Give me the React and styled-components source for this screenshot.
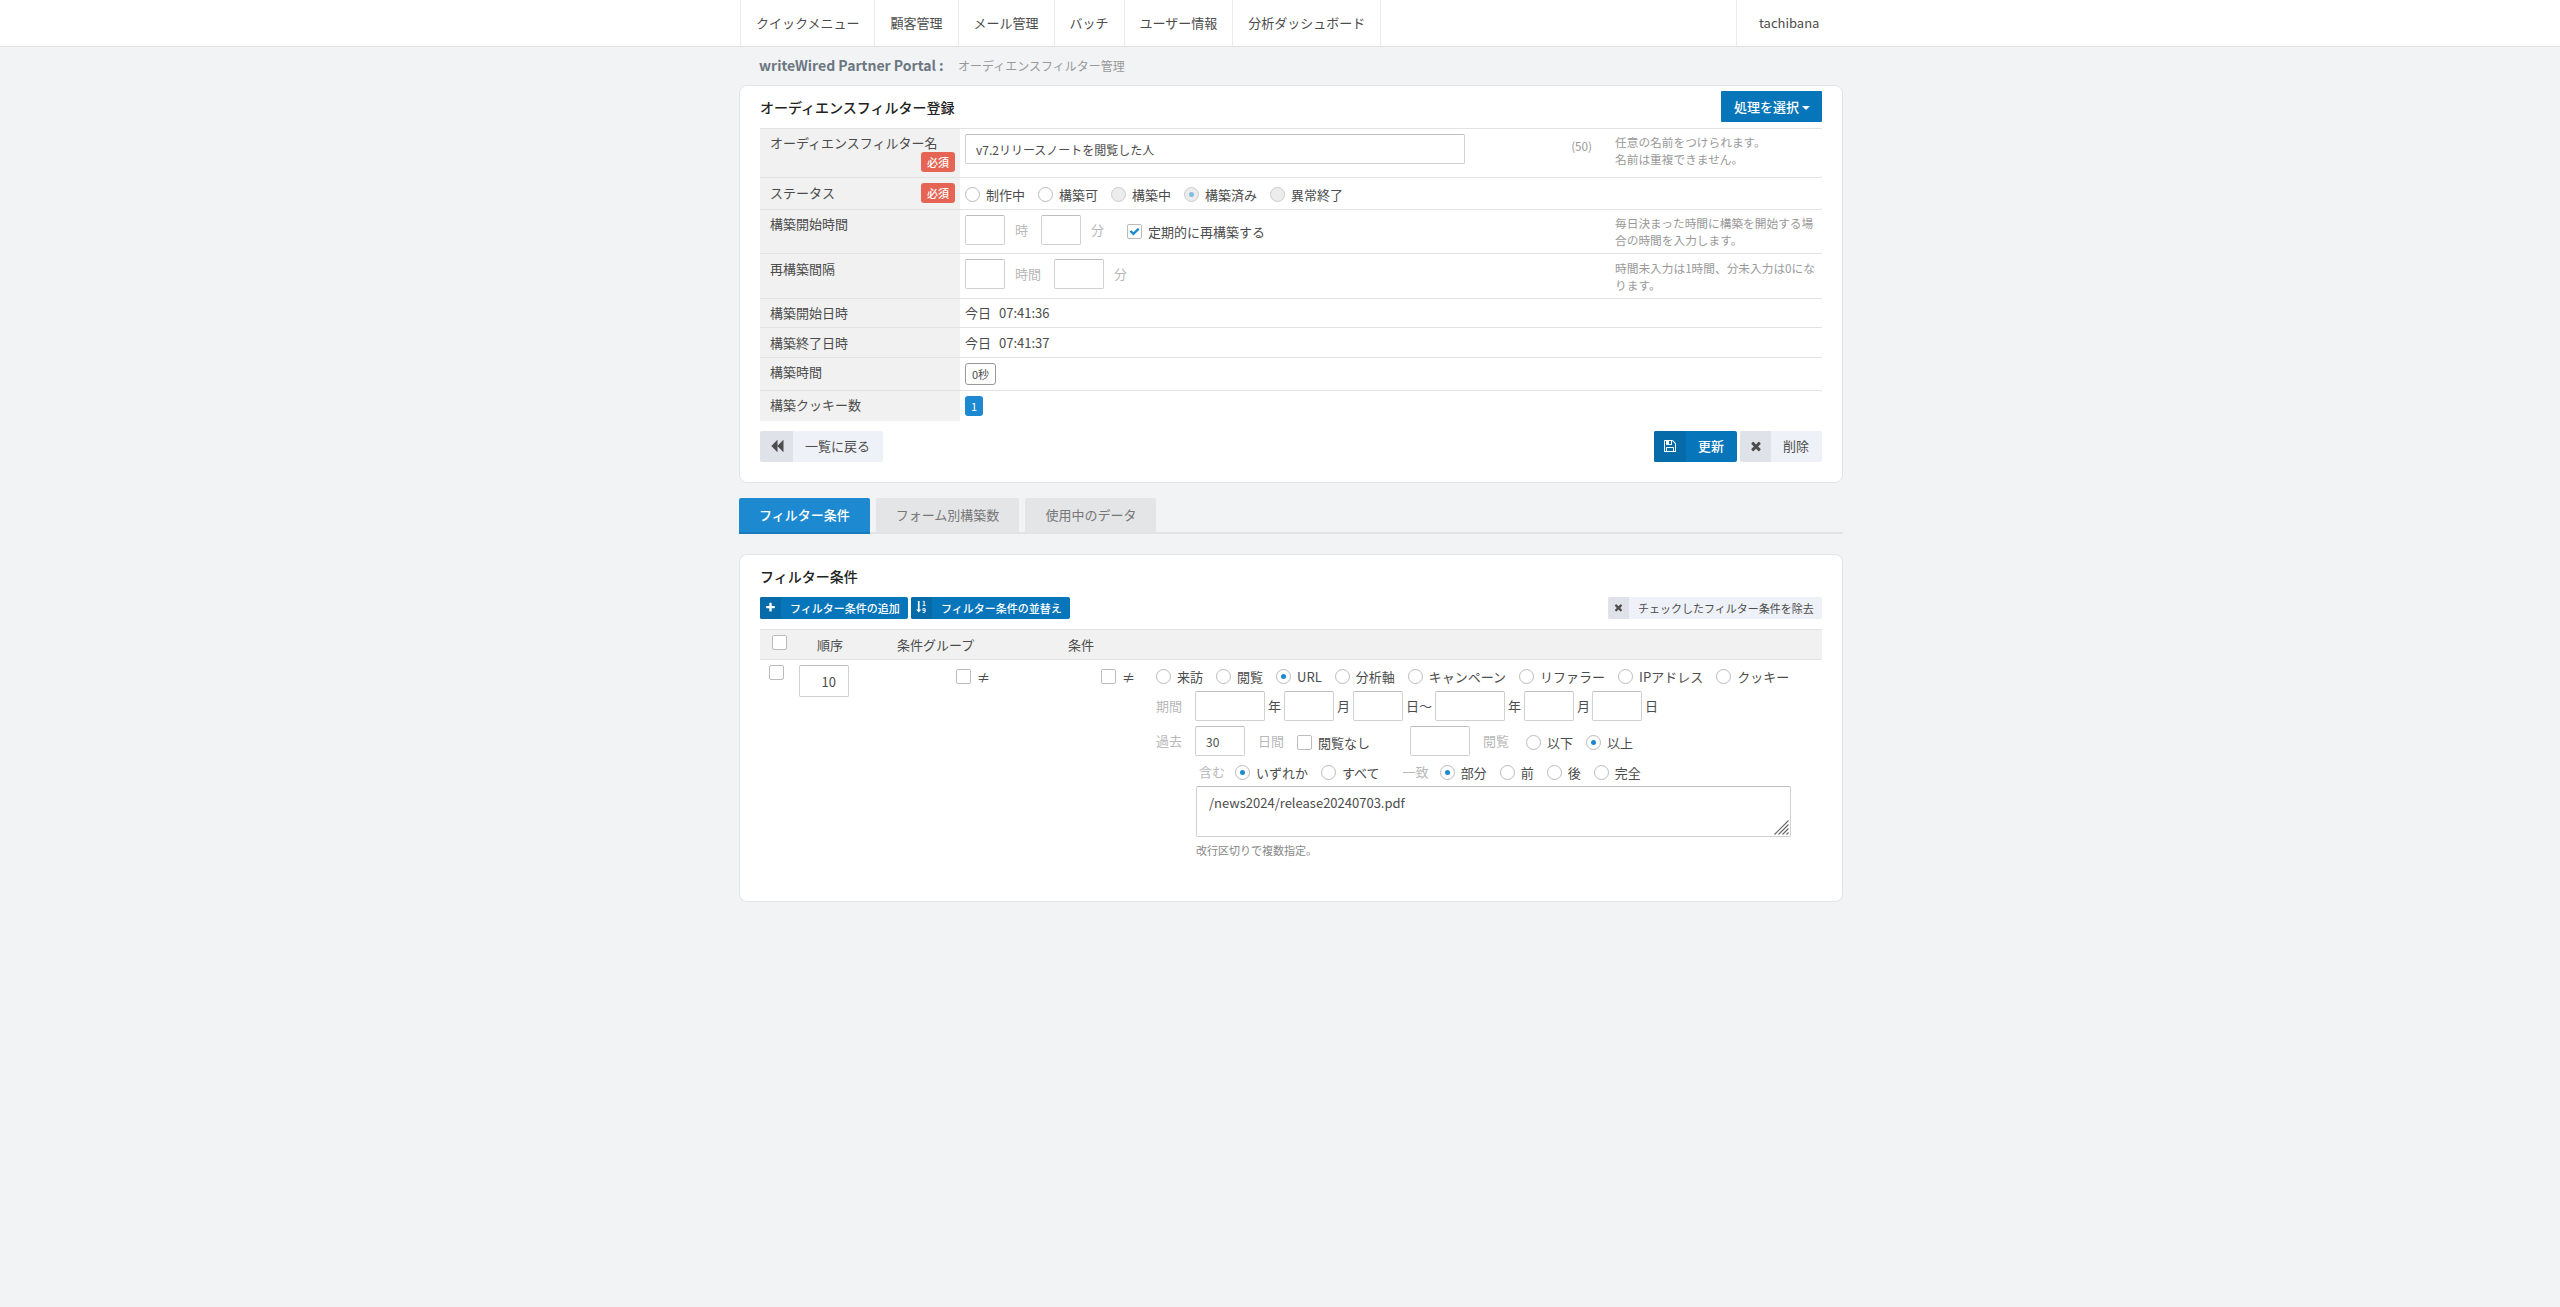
import React from "react";
import styled, { createGlobalStyle, css } from "styled-components";

const ICONS = {
  backward:
    "M1683 141q19-19 32-13t13 32v1472q0 26-13 32t-32-13l-710-710q-9-9-13-19v710q0 26-13 32t-32-13l-710-710q-19-19-19-45t19-45l710-710q19-19 32-13t13 32v710q4-10 13-19z",
  save: "M512 1536h768v-384h-768v384zm896 0h128v-896q0-14-10-38.5t-20-34.5l-281-281q-10-10-34-20t-39-10v416q0 40-28 68t-68 28h-576q-40 0-68-28t-28-68v-416h-128v1280h128v-416q0-40 28-68t68-28h832q40 0 68 28t28 68v416zm-384-928v-320q0-13-9.5-22.5t-22.5-9.5h-192q-13 0-22.5 9.5t-9.5 22.5v320q0 13 9.5 22.5t22.5 9.5h192q13 0 22.5-9.5t9.5-22.5zm640 32v928q0 40-28 68t-68 28h-1344q-40 0-68-28t-28-68v-1344q0-40 28-68t68-28h928q40 0 88 20t76 48l280 280q28 28 48 76t20 88z",
  times:
    "M1490 1322q0 40-28 68l-136 136q-28 28-68 28t-68-28l-294-294-294 294q-28 28-68 28t-68-28l-136-136q-28-28-28-68t28-68l294-294-294-294q-28-28-28-68t28-68l136-136q28-28 68-28t68 28l294 294 294-294q28-28 68-28t68 28l136 136q28 28 28 68t-28 68l-294 294 294 294q28 28 28 68z",
  plus: "M1600 736v192q0 40-28 68t-68 28h-416v416q0 40-28 68t-68 28h-192q-40 0-68-28t-28-68v-416h-416q-40 0-68-28t-28-68v-192q0-40 28-68t68-28h416v-416q0-40 28-68t68-28h192q40 0 68 28t28 68v416h416q40 0 68 28t28 68z",
  check:
    "M1671 566q0 40-28 68l-724 724-136 136q-28 28-68 28t-68-28l-136-136-362-362q-28-28-28-68t28-68l136-136q28-28 68-28t68 28l294 295 656-657q28-28 68-28t68 28l136 136q28 28 28 68z",
};

const MENU = [
  "クイックメニュー",
  "顧客管理",
  "メール管理",
  "バッチ",
  "ユーザー情報",
  "分析ダッシュボード",
];

const STATUSES = [
  { label: "制作中" },
  { label: "構築可" },
  { label: "構築中", disabled: true },
  { label: "構築済み", disabled: true, checked: true },
  { label: "異常終了", disabled: true },
];

const TARGETS = [
  "来訪",
  "閲覧",
  "URL",
  "分析軸",
  "キャンペーン",
  "リファラー",
  "IPアドレス",
  "クッキー",
];

function Icon({ name, size = 14 }) {
  return (
    <svg width={size} height={size} viewBox="0 0 1792 1792" fill="currentColor">
      <path d={ICONS[name]} />
    </svg>
  );
}

function SortIcon() {
  return (
    <SortSvg width="11" height="12" viewBox="0 0 11 12">
      <path d="M1.9 0h1.7v8.4h1.7L2.75 11.4 0.2 8.4h1.7z" />
      <text x="6" y="5.4">
        1
      </text>
      <text x="6" y="11.6">
        9
      </text>
    </SortSvg>
  );
}

function RadioOption({ name, label, checked, disabled }) {
  return (
    <Option>
      <Radio
        type="radio"
        name={name}
        defaultChecked={checked}
        disabled={disabled}
      />
      {label}
    </Option>
  );
}

function CheckOption({ label, checked }) {
  return (
    <Option>
      <Checkbox>{checked && <Icon name="check" size={11} />}</Checkbox>
      {label}
    </Option>
  );
}

function IconButton({ icon, children, ...rest }) {
  return (
    <ButtonBox type="button" {...rest}>
      <ButtonIcon {...rest}>{icon}</ButtonIcon>
      <ButtonText {...rest}>{children}</ButtonText>
    </ButtonBox>
  );
}

function Field({ label, required, height, top = 4, count, help, children }) {
  return (
    <FieldRow $height={height}>
      <FieldLabel $top={top}>
        {label}
        {required && <Required>必須</Required>}
      </FieldLabel>
      <FieldBody>{children}</FieldBody>
      {count && <FieldCount>{count}</FieldCount>}
      <FieldHelp $top={top}>{help}</FieldHelp>
    </FieldRow>
  );
}

function FilterForm() {
  return (
    <Card $height={398}>
      <CardHeader>
        <Title>オーディエンスフィルター登録</Title>
        <Dropdown type="button">
          処理を選択
          <Caret />
        </Dropdown>
      </CardHeader>
      <Field
        label="オーディエンスフィルター名"
        required
        height={49}
        count="(50)"
        help={
          <>
            任意の名前をつけられます。
            <br />
            名前は重複できません。
          </>
        }
      >
        <TextInput $width={500} defaultValue="v7.2リリースノートを閲覧した人" />
      </Field>
      <Field label="ステータス" required height={32} top={5}>
        <StatusGroup>
          {STATUSES.map((s) => (
            <RadioOption key={s.label} name="status" {...s} />
          ))}
        </StatusGroup>
      </Field>
      <Field
        label="構築開始時間"
        height={44}
        help="毎日決まった時間に構築を開始する場合の時間を入力します。"
      >
        <TextInput $width={40} />
        <Unit>時</Unit>
        <TextInput $width={40} />
        <Unit>分</Unit>
        <Rebuild>
          <CheckOption label="定期的に再構築する" checked />
        </Rebuild>
      </Field>
      <Field
        label="再構築間隔"
        height={45}
        top={5}
        help="時間未入力は1時間、分未入力は0になります。"
      >
        <TextInput $width={40} />
        <Unit>時間</Unit>
        <TextInput $width={50} />
        <Unit>分</Unit>
      </Field>
      <Field label="構築開始日時" height={29}>
        <DateText $lift>
          <span>今日</span>
          <span>07:41:36</span>
        </DateText>
      </Field>
      <Field label="構築終了日時" height={30} top={5}>
        <DateText>
          <span>今日</span>
          <span>07:41:37</span>
        </DateText>
      </Field>
      <Field label="構築時間" height={33}>
        <Badge>0秒</Badge>
      </Field>
      <Field label="構築クッキー数" height={31}>
        <Badge $solid>1</Badge>
      </Field>
      <FormActions>
        <IconButton icon={<Icon name="backward" />} $iconWidth={33} $width={123}>
          一覧に戻る
        </IconButton>
        <ActionGroup>
          <IconButton
            icon={<Icon name="save" />}
            $primary
            $iconWidth={32}
            $width={83}
          >
            更新
          </IconButton>
          <IconButton icon={<Icon name="times" />} $iconWidth={31} $width={82}>
            削除
          </IconButton>
        </ActionGroup>
      </FormActions>
    </Card>
  );
}

function ConditionEditor() {
  return (
    <Conditions>
      <OptionLine>
        {TARGETS.map((t) => (
          <RadioOption key={t} name="target" label={t} checked={t === "URL"} />
        ))}
      </OptionLine>
      <PeriodLine>
        <LineLabel>期間</LineLabel>
        <TextInput $width={70} />
        <span>年</span>
        <TextInput $width={50} />
        <span>月</span>
        <TextInput $width={50} />
        <span>日〜</span>
        <TextInput $width={70} />
        <span>年</span>
        <TextInput $width={50} />
        <span>月</span>
        <TextInput $width={50} />
        <span>日</span>
      </PeriodLine>
      <PastLine>
        <LineLabel>過去</LineLabel>
        <TextInput $width={50} defaultValue="30" />
        <Faint $left={13} $right={13}>
          日間
        </Faint>
        <Lowered>
          <CheckOption label="閲覧なし" />
        </Lowered>
        <CountInput $width={60} />
        <Faint $left={13} $right={17}>
          閲覧
        </Faint>
        <Lowered>
          <RadioOption name="bound" label="以下" />
          <RadioOption name="bound" label="以上" checked />
        </Lowered>
      </PastLine>
      <MatchLine>
        <Faint $left={43} $right={10} $raised>
          含む
        </Faint>
        <OptionLine>
          <RadioOption name="contain" label="いずれか" checked />
          <RadioOption name="contain" label="すべて" />
        </OptionLine>
        <Faint $left={23} $right={11} $raised>
          一致
        </Faint>
        <OptionLine>
          <RadioOption name="match" label="部分" checked />
          <RadioOption name="match" label="前" />
          <RadioOption name="match" label="後" />
          <RadioOption name="match" label="完全" />
        </OptionLine>
      </MatchLine>
      <UrlBox>
        /news2024/release20240703.pdf
        <Grip width="15" height="15" viewBox="0 0 15 15">
          <path d="M0.5 14.5L14.5 0.5M4.5 14.5L14.5 4.5M8.5 14.5L14.5 8.5M12.5 14.5L14.5 12.5" />
        </Grip>
      </UrlBox>
      <Hint>改行区切りで複数指定。</Hint>
    </Conditions>
  );
}

function FilterConditions() {
  return (
    <Card $height={348}>
      <ConditionTitle>フィルター条件</ConditionTitle>
      <Toolbar>
        <IconButton
          icon={<Icon name="plus" size={11} />}
          $primary
          $small
          $iconWidth={21}
          $width={148}
        >
          フィルター条件の追加
        </IconButton>
        <IconButton
          icon={<SortIcon />}
          $primary
          $small
          $iconWidth={21}
          $width={159}
        >
          フィルター条件の並替え
        </IconButton>
        <ToolbarEnd>
          <IconButton
            icon={<Icon name="times" size={11} />}
            $small
            $iconWidth={21}
            $width={214}
          >
            チェックしたフィルター条件を除去
          </IconButton>
        </ToolbarEnd>
      </Toolbar>
      <TableHead>
        <Cell $left={12} $top={5}>
          <Checkbox />
        </Cell>
        <Cell $left={23} $top={5}>
          順序
        </Cell>
        <Cell $left={5} $top={5}>
          条件グループ
        </Cell>
        <Cell $left={5} $top={5}>
          条件
        </Cell>
      </TableHead>
      <TableRow>
        <Cell $left={9} $top={5}>
          <Checkbox />
        </Cell>
        <Cell $left={5} $top={5}>
          <OrderInput $width={50} defaultValue="10" />
        </Cell>
        <Cell $left={64} $top={9}>
          <CheckOption label="≠" />
        </Cell>
        <Cell $left={38} $top={9}>
          <CheckOption label="≠" />
        </Cell>
        <ConditionEditor />
      </TableRow>
    </Card>
  );
}

function App() {
  return (
    <>
      <GlobalStyle />
      <NavBar>
        <NavInner>
          {MENU.map((item) => (
            <NavItem key={item}>{item}</NavItem>
          ))}
          <UserItem>tachibana</UserItem>
        </NavInner>
      </NavBar>
      <Page>
        <Breadcrumb>
          <Brand>writeWired Partner Portal :</Brand>
          <Crumb>オーディエンスフィルター管理</Crumb>
        </Breadcrumb>
        <FilterForm />
        <Tabs>
          <Tab $active>フィルター条件</Tab>
          <Tab>フォーム別構築数</Tab>
          <Tab>使用中のデータ</Tab>
        </Tabs>
        <FilterConditions />
      </Page>
    </>
  );
}

const GlobalStyle = createGlobalStyle`
  * {
    box-sizing: border-box;
  }

  body {
    margin: 0;
    min-height: 100vh;
    background: #f1f3f5;
    color: #4c4c4c;
    font-family: "Noto Sans CJK JP", sans-serif;
    font-size: 13px;
    line-height: 19px;
  }

  svg {
    display: block;
    flex-shrink: 0;
  }

  input,
  button {
    font-family: inherit;
  }
`;

const NavBar = styled.nav`
  height: 47px;
  background: #fff;
  border-bottom: 1px solid #e0e2e4;
`;

const NavInner = styled.div`
  display: flex;
  width: 1103px;
  height: 46px;
  margin-left: calc(50% - 540px);
`;

const NavItem = styled.a`
  padding: 13px 15px 0;
  border-left: 1px solid #e9eaec;

  &:nth-last-child(2) {
    border-right: 1px solid #e9eaec;
  }
`;

const UserItem = styled(NavItem)`
  width: 107px;
  margin-left: auto;
  padding: 13px 0 0 22px;
`;

const Page = styled.main`
  width: 1104px;
  margin-left: calc(50% - 541px);
`;

const Breadcrumb = styled.div`
  display: flex;
  height: 38px;
  padding: 9px 0 0 20px;
`;

const Brand = styled.span`
  width: 199px;
  color: #6c7781;
  font-size: 14px;
  font-weight: 700;
  white-space: nowrap;
`;

const Crumb = styled.span`
  color: #999;
  font-size: 12px;
`;

const Card = styled.section`
  height: ${({ $height }) => $height}px;
  padding: 0 20px;
  background: #fff;
  border: 1px solid #e2e4e6;
  border-radius: 8px;
`;

const CardHeader = styled.header`
  display: flex;
  justify-content: space-between;
  align-items: flex-start;
  height: 42px;
  padding-top: 5px;
`;

const Title = styled.h2`
  margin: 6px 0 0;
  color: #222;
  font-size: 14px;
  font-weight: 500;
  line-height: 20px;
`;

const ConditionTitle = styled(Title)`
  height: 42px;
  margin: 0;
  padding-top: 11px;
`;

const Dropdown = styled.button`
  display: flex;
  align-items: center;
  gap: 3px;
  width: 101px;
  height: 31px;
  padding: 0 0 0 13px;
  background: #0775ba;
  border: 0;
  border-radius: 1px;
  color: #fff;
  font-size: 13px;
  font-weight: 500;
`;

const Caret = styled.span`
  margin-top: 2px;
  border: 4px solid transparent;
  border-top-color: #fff;
  border-bottom: 0;
`;

const FieldRow = styled.div`
  display: flex;
  height: ${({ $height }) => $height}px;
  border-top: 1px solid #e2e2e2;
`;

const FieldLabel = styled.div`
  display: flex;
  flex-wrap: wrap;
  justify-content: space-between;
  align-content: flex-start;
  width: 200px;
  padding: ${({ $top }) => $top}px 5px 0 10px;
  background: #f1f1f1;
`;

const Required = styled.span`
  width: 34px;
  height: 20px;
  margin-left: auto;
  background: #e66454;
  border-radius: 3px;
  color: #fff;
  font-size: 11px;
  font-weight: 500;
  line-height: 20px;
  text-align: center;
`;

const FieldBody = styled.div`
  display: flex;
  flex: 1;
  align-items: flex-start;
  padding: 5px 0 0 5px;
`;

const FieldCount = styled.div`
  padding: 7px 18px 0 0;
  color: #999;
  font-size: 11.7px;
`;

const FieldHelp = styled.div`
  width: 212px;
  padding: ${({ $top }) => $top + 1}px 5px 0;
  color: #999;
  font-size: 11.7px;
  line-height: 16.5px;
`;

const TextInput = styled.input`
  width: ${({ $width }) => $width}px;
  height: 30px;
  padding: 0 10px;
  background: #fff;
  border: 1px solid #d0d0d0;
  border-top-color: #bdbdbd;
  border-radius: 2px;
  color: #4c4c4c;
  font-size: 12px;
  outline: 0;
`;

const OrderInput = styled(TextInput)`
  height: 32px;
  padding-right: 12px;
  font-size: 13px;
  text-align: right;
`;

const Unit = styled.span`
  margin: 5px 13px 0 10px;
  color: #b8b8b8;
`;

const Option = styled.label`
  display: flex;
  align-items: center;
  gap: 6px;
  height: 15px;
  white-space: nowrap;
`;

const markBox = css`
  display: grid;
  place-content: center;
  width: 15px;
  height: 15px;
  margin: 0;
  background: #fff;
  border: 1px solid #bbb;
`;

const Radio = styled.input`
  ${markBox}
  appearance: none;
  border-radius: 50%;

  &:checked::after {
    content: "";
    width: 5px;
    height: 5px;
    background: #1d89d0;
    border-radius: 50%;
  }

  &:disabled {
    background: #ececec;
    border-color: #ccc;
  }

  &:disabled::after {
    opacity: 0.5;
  }
`;

const Checkbox = styled.span`
  ${markBox}
  border-radius: 2px;
  color: #1d89d0;
`;

const StatusGroup = styled.div`
  display: flex;
  gap: 13px;
  padding-top: 4px;
`;

const Rebuild = styled.div`
  padding: 9px 0 0 10px;
`;

const DateText = styled.div`
  display: flex;
  gap: 8px;
  margin-top: ${({ $lift }) => ($lift ? -1 : 0)}px;
`;

const Badge = styled.span`
  min-width: 18px;
  height: 22px;
  padding: 0 6px;
  border: 1px solid #999;
  border-radius: 3px;
  font-size: 11px;
  line-height: 21px;

  ${({ $solid }) =>
    $solid &&
    css`
      height: 20px;
      background: #1d89d0;
      border: 0;
      color: #fff;
    `}
`;

const FormActions = styled.div`
  display: flex;
  justify-content: space-between;
  padding-top: 10px;
`;

const ActionGroup = styled.div`
  display: flex;
  gap: 3px;
`;

const ButtonBox = styled.button`
  display: flex;
  width: ${({ $width }) => $width}px;
  height: ${({ $small }) => ($small ? 22 : 31)}px;
  padding: 0;
  background: ${({ $primary }) => ($primary ? "#0775ba" : "#eef1f7")};
  border: 0;
  border-radius: 2px;
  color: ${({ $primary }) => ($primary ? "#fff" : "#4c4c4c")};
  font-size: ${({ $small }) => ($small ? 11 : 13)}px;
  font-weight: ${({ $primary }) => ($primary ? 500 : 400)};
`;

const ButtonIcon = styled.span`
  display: flex;
  justify-content: center;
  align-items: center;
  width: ${({ $iconWidth }) => $iconWidth}px;
  height: 100%;
  padding-bottom: ${({ $small }) => ($small ? 2 : 1)}px;
  background: ${({ $primary }) => ($primary ? "#066ba9" : "#dfe2e8")};
  border-radius: 2px 0 0 2px;
`;

const ButtonText = styled.span`
  padding-left: ${({ $small }) => ($small ? 9 : 12)}px;
  line-height: ${({ $small }) => ($small ? 23 : 30)}px;
  white-space: nowrap;
`;

const SortSvg = styled.svg`
  overflow: visible;
  fill: #fff;
  font-size: 6.5px;
  font-weight: 700;
`;

const Tabs = styled.div`
  display: flex;
  gap: 6px;
  height: 36px;
  margin: 15px 0 20px;
  border-bottom: 2px solid #e1e3e5;
`;

const Tab = styled.a`
  height: 36px;
  padding: 0 20px;
  background: #e4e5e7;
  border-bottom: 2px solid #e1e3e5;
  border-radius: 2px 2px 0 0;
  color: #777;
  line-height: 33px;

  ${({ $active }) =>
    $active &&
    css`
      background: #1d89d0;
      border-bottom-color: #1a7abb;
      color: #fff;
      font-weight: 500;
    `}
`;

const Toolbar = styled.div`
  display: flex;
  gap: 3px;
`;

const ToolbarEnd = styled.div`
  margin-left: auto;
`;

const TableRow = styled.div`
  display: grid;
  grid-template-columns: 34px 98px 171px 93px 1fr;
`;

const TableHead = styled(TableRow)`
  height: 31px;
  margin-top: 10px;
  background: #f1f1f1;
  border: solid #e2e2e2;
  border-width: 1px 0;
`;

const Cell = styled.div`
  padding: ${({ $top }) => $top}px 0 0 ${({ $left }) => $left}px;
`;

const Conditions = styled.div`
  display: flex;
  flex-direction: column;
  padding-top: 9px;
`;

const OptionLine = styled.div`
  display: flex;
  gap: 13px;
`;

const PeriodLine = styled.div`
  display: flex;
  align-items: center;
  gap: 3px;
  margin-top: 7px;

  > span {
    padding-bottom: 2px;
  }

  > input:last-of-type {
    margin-left: -1px;
  }
`;

const PastLine = styled.div`
  display: flex;
  align-items: center;
  margin-top: 5px;

  > span {
    padding-bottom: 2px;
  }
`;

const MatchLine = styled.div`
  display: flex;
  height: 15px;
  margin-top: 9px;
`;

const LineLabel = styled.span`
  width: 39px;
  color: #b8b8b8;

  ${PeriodLine} > & {
    width: 36px;
  }
`;

const Faint = styled.span`
  margin: ${({ $raised }) => ($raised ? "-3px" : 0)}
    ${({ $right }) => $right}px 0 ${({ $left }) => $left}px;
  color: #b8b8b8;
`;

const Lowered = styled.div`
  display: flex;
  gap: 13px;
  padding-top: 3px;
`;

const CountInput = styled(TextInput)`
  margin-left: 40px;
`;

const UrlBox = styled.div`
  position: relative;
  width: 595px;
  height: 51px;
  margin: 6px 0 0 40px;
  padding: 6px 12px;
  border: 1px solid #d0d0d0;
  border-top-color: #bdbdbd;
  border-radius: 2px;
`;

const Grip = styled.svg`
  position: absolute;
  right: 1px;
  bottom: 1px;
  fill: none;
  stroke: #666;
  stroke-width: 1.1;
`;

const Hint = styled.p`
  margin: 4px 0 0 40px;
  color: #888;
  font-size: 11px;
`;

export default App;
